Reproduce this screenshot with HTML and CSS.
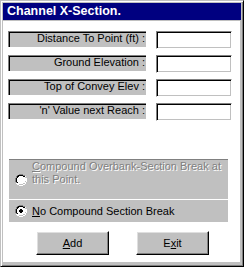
FILE: index.html
```html
<!DOCTYPE html>
<html lang="en">
<head>
  <meta charset="UTF-8" />
  <title>Channel X-Section</title>
  <link rel="stylesheet" href="styles.css">
</head>
<body>

<div class="window">
  <div class="titlebar">Channel X-Section.</div>

  <div class="client">
    <div class="fields">
      <div class="row">
        <span class="label">Distance To Point (ft) :</span>
        <input class="field" type="text" />
      </div>
      <div class="row">
        <span class="label">Ground Elevation :</span>
        <input class="field" type="text" />
      </div>
      <div class="row">
        <span class="label">Top of Convey Elev :</span>
        <input class="field" type="text" />
      </div>
      <div class="row">
        <span class="label">'n' Value next Reach :</span>
        <input class="field" type="text" />
      </div>
    </div>

    <div class="options">
      <div class="option option-tall disabled">
        <svg class="radio" width="12" height="12" viewBox="0 0 12 12">
          <path d="M4 0h4v1h2v1h1v2h1v4h-1v2h-1v1h-2v1h-4v-1h-2v-1h-1v-2h-1v-4h1v-2h1v-1h2z" fill="#fff"/>
          <path d="M4 0h4v1h2v1h-2v-1h-4v1h-2v2h-1v4h1v1h-1v-1h-1v-4h1v-2h1v-1h2z" fill="#808080"/>
          <path d="M4 1h4v1h2v1h-2v-1h-4v1h-1v1h-1v4h1v1h-1v-1h-1v-4h1v-2h1v-1h2z" fill="#000"/>
          <path d="M10 2h1v2h1v4h-1v2h-1v1h-2v1h-4v-1h-2v-1h2v1h4v-1h2v-2h1v-4h-1z" fill="#fff"/>
          <path d="M10 3h0v1h1v4h-1v2h-2v1h-4v-1h4v-1h2v-2h1v-4h-1z" fill="#c0c0c0"/>
        </svg>
        <span class="option-text"><span class="line"><u>C</u>ompound Overbank-Section Break at</span><span class="line">this Point.</span></span>
      </div>
      <div class="option">
        <svg class="radio" width="12" height="12" viewBox="0 0 12 12">
          <path d="M4 0h4v1h2v1h1v2h1v4h-1v2h-1v1h-2v1h-4v-1h-2v-1h-1v-2h-1v-4h1v-2h1v-1h2z" fill="#fff"/>
          <path d="M4 0h4v1h2v1h-2v-1h-4v1h-2v2h-1v4h1v1h-1v-1h-1v-4h1v-2h1v-1h2z" fill="#808080"/>
          <path d="M4 1h4v1h2v1h-2v-1h-4v1h-1v1h-1v4h1v1h-1v-1h-1v-4h1v-2h1v-1h2z" fill="#000"/>
          <path d="M10 2h1v2h1v4h-1v2h-1v1h-2v1h-4v-1h-2v-1h2v1h4v-1h2v-2h1v-4h-1z" fill="#fff"/>
          <path d="M10 3h0v1h1v4h-1v2h-2v1h-4v-1h4v-1h2v-2h1v-4h-1z" fill="#c0c0c0"/>
          <path d="M5 4h2v1h1v2h-1v1h-2v-1h-1v-2h1z" fill="#000"/>
        </svg>
        <span class="option-text"><u>N</u>o Compound Section Break</span>
      </div>
    </div>

    <div class="buttons">
      <button class="btn"><u>A</u>dd</button>
      <button class="btn">E<u>x</u>it</button>
    </div>
  </div>
</div>

</body>
</html>
```

FILE: styles.css
```css
* { box-sizing: border-box; }

body {
  margin: 0;
  font-family: 'Liberation Sans', Arial, sans-serif;
  font-size: 11px;
  color: #000;
  background: #c0c0c0;
}

.window {
  width: 244px;
  height: 267px;
  background: #c0c0c0;
  border: 1px solid;
  border-color: #c0c0c0 #000 #000 #c0c0c0;
  box-shadow: inset 1px 1px 0 #fff, inset -1px -1px 0 #808080;
  padding: 2px 3px 4px 2px;
  display: flex;
  flex-direction: column;
}

.titlebar {
  background: #000080;
  color: #fff;
  font-weight: bold;
  font-size: 12.5px;
  height: 17px;
  line-height: 17px;
  padding-left: 4px;
  margin-right: -1px;
}

.client {
  flex: 1;
  background: #fff;
  margin-top: 1px;
  padding: 10px 0 0 5px;
}

.fields {
  display: flex;
  flex-direction: column;
  gap: 6px;
}

.row {
  display: flex;
  align-items: flex-start;
  gap: 10px;
}

.label {
  width: 138px;
  height: 16px;
  line-height: 13px;
  text-align: right;
  padding-right: 1px;
  background: #c0c0c0;
  border-top: 1px solid #808080;
  border-left: 1px solid #808080;
  box-shadow: inset 1px 1px 0 #000;
  white-space: nowrap;
}

.field {
  width: 76px;
  height: 18px;
  margin: 0;
  padding: 0 2px;
  font: inherit;
  background: #fff;
  border: 1px solid;
  border-color: #808080 #fff #fff #808080;
  box-shadow: inset 1px 1px 0 #000, inset -1px -1px 0 #c0c0c0;
  outline: none;
}

.options {
  margin: 38px 0 0 1px;
  width: 219px;
}

.option {
  display: flex;
  align-items: center;
  gap: 5px;
  background: #c0c0c0;
  padding-left: 6px;
  height: 22px;
}

.option-tall {
  height: 40px;
  margin-bottom: 1px;
  border-top: 1px solid #808080;
}

.option-tall .option-text {
  align-self: flex-start;
  display: flex;
  flex-direction: column;
  gap: 0;
}

.line {
  display: block;
  height: 13px;
  line-height: 13px;
  overflow: visible;
}

.radio { flex: none; }

.disabled .option-text {
  color: #808080;
  text-shadow: 1px 1px 0 #fff;
}

.buttons {
  display: flex;
  gap: 27px;
  margin: 9px 0 0 28px;
}

.btn {
  width: 73px;
  height: 24px;
  padding: 0;
  font: inherit;
  color: #000;
  background: #c0c0c0;
  border: 1px solid;
  border-color: #fff #000 #000 #fff;
  box-shadow: inset -1px -1px 0 #808080, inset 1px 1px 0 #dfdfdf;
}
```
